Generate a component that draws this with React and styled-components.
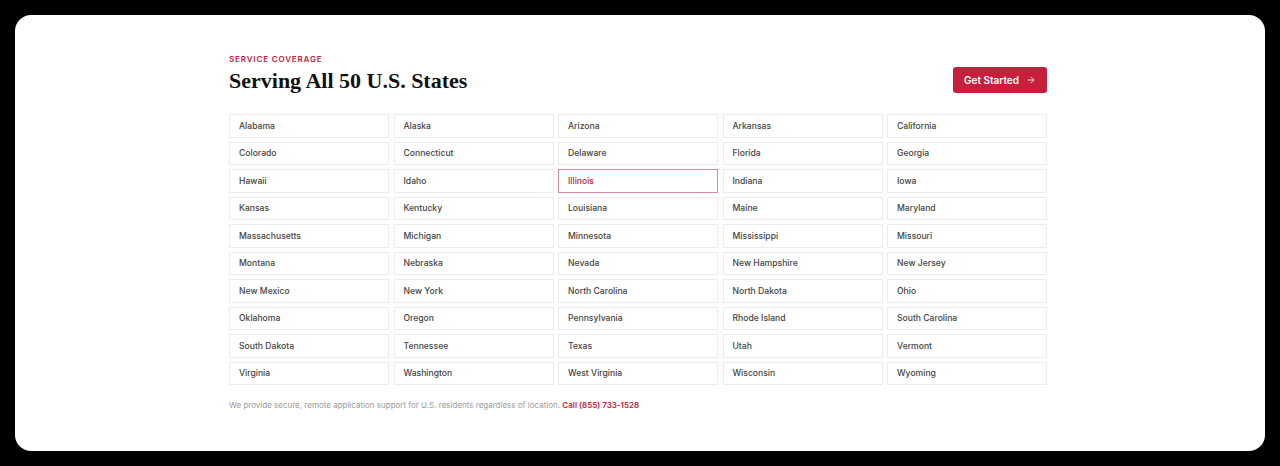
import styled, { createGlobalStyle } from "styled-components";
import { ArrowRight } from "lucide-react";

const GlobalStyle = createGlobalStyle`
  html, body {
    margin: 0;
    padding: 0;
    background: #000;
  }
  body {
    font-family: Inter, "Noto Sans", sans-serif;
    -webkit-font-smoothing: antialiased;
  }
`;

const STATES = [
  "Alabama", "Alaska", "Arizona", "Arkansas", "California",
  "Colorado", "Connecticut", "Delaware", "Florida", "Georgia",
  "Hawaii", "Idaho", "Illinois", "Indiana", "Iowa",
  "Kansas", "Kentucky", "Louisiana", "Maine", "Maryland",
  "Massachusetts", "Michigan", "Minnesota", "Mississippi", "Missouri",
  "Montana", "Nebraska", "Nevada", "New Hampshire", "New Jersey",
  "New Mexico", "New York", "North Carolina", "North Dakota", "Ohio",
  "Oklahoma", "Oregon", "Pennsylvania", "Rhode Island", "South Carolina",
  "South Dakota", "Tennessee", "Texas", "Utah", "Vermont",
  "Virginia", "Washington", "West Virginia", "Wisconsin", "Wyoming",
];

const Page = styled.div`
  padding: 15px;
  height: 466px;
  box-sizing: border-box;
`;

const Card = styled.section`
  background: #fff;
  border-radius: 16px;
  height: 436px;
  box-sizing: border-box;
  padding: 39px 218px 0 214px;
`;

const Header = styled.header`
  display: flex;
  justify-content: space-between;
  align-items: flex-end;
`;

const Eyebrow = styled.div`
  font-size: 8px;
  font-weight: 600;
  letter-spacing: 0.85px;
  color: #c8203c;
  line-height: 10px;
  margin-bottom: 3px;
`;

const Title = styled.h2`
  margin: 0;
  padding-top: 1px;
  font-family: "Liberation Serif", serif;
  font-weight: 700;
  font-size: 22px;
  line-height: 25px;
  color: #111;
`;

const Button = styled.button`
  display: flex;
  align-items: center;
  justify-content: center;
  gap: 7px;
  height: 26px;
  width: 94px;
  background: #c8203c;
  color: #fff;
  border: none;
  border-radius: 3px;
  font-family: Inter, sans-serif;
  font-size: 10px;
  font-weight: 600;
  cursor: pointer;
`;

const Grid = styled.ul`
  list-style: none;
  margin: 21px 0 0;
  padding: 0;
  display: grid;
  grid-template-columns: repeat(5, 1fr);
  column-gap: 4.5px;
  row-gap: 4px;
`;

const State = styled.li`
  height: 23.5px;
  box-sizing: border-box;
  display: flex;
  align-items: center;
  padding-left: 9px;
  border: 1px solid ${(p) => (p.$active ? "#d98a98" : "#ececec")};
  font-size: 8.6px;
  font-weight: 500;
  color: ${(p) => (p.$active ? "#c8203c" : "#444")};
`;

const Note = styled.p`
  margin: 15px 0 0;
  font-size: 8px;
  line-height: 10px;
  color: #9a9a9a;
`;

const Phone = styled.a`
  color: #c8203c;
  font-weight: 600;
  text-decoration: none;
`;

export default function App() {
  return (
    <Page>
      <GlobalStyle />
      <Card>
        <Header>
          <div>
            <Eyebrow>SERVICE COVERAGE</Eyebrow>
            <Title>Serving All 50 U.S. States</Title>
          </div>
          <Button>
            Get Started
            <ArrowRight size={10} strokeWidth={2} />
          </Button>
        </Header>
        <Grid>
          {STATES.map((s) => (
            <State key={s} $active={s === "Illinois"}>
              {s}
            </State>
          ))}
        </Grid>
        <Note>
          We provide secure, remote application support for U.S. residents
          regardless of location. <Phone href="#">Call (855) 733-1528</Phone>
        </Note>
      </Card>
    </Page>
  );
}
